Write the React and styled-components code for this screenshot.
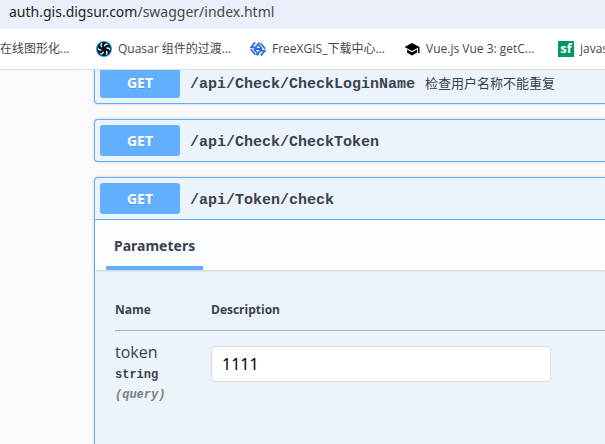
import React from "react";
import styled, { createGlobalStyle } from "styled-components";

const GlobalStyle = createGlobalStyle`
  *, *::before, *::after { box-sizing: border-box; }
  body {
    margin: 0;
    background: #fafafa;
    color: #3b4151;
    font-family: "Open Sans", "Noto Sans CJK SC", sans-serif;
  }
`;

const Page = styled.div`
  display: flex;
  flex-direction: column;
  height: 100vh;
  overflow: hidden;
`;

const AddressBar = styled.div`
  flex: none;
  height: 29px;
  padding: 0 9px;
  background: #ebeff9;
  color: #474747;
  font-family: "Noto Sans", sans-serif;
  font-size: 14px;
  line-height: 24px;
  white-space: nowrap;
`;

const Host = styled.span`
  color: #1f1f1f;
`;

const BookmarkBar = styled.nav`
  flex: none;
  display: flex;
  align-items: center;
  gap: 18px;
  height: 41px;
  background: #fff;
  border-bottom: 1px solid #dedfe0;
  overflow: hidden;
`;

const Bookmark = styled.a`
  flex: none;
  display: flex;
  align-items: center;
  gap: 6px;
  width: ${(p) => (p.$partial ? 78 : 136)}px;
  color: #474747;
  font-size: 12px;
  line-height: 22px;
  text-decoration: none;
  white-space: nowrap;

  svg { flex: none; }
`;

const Viewport = styled.div`
  flex: 1;
  min-height: 0;
  overflow: hidden;
`;

const Operations = styled.main`
  display: flex;
  flex-direction: column;
  gap: 15px;
  margin-top: -9px;
  padding-left: 94px;
`;

const Block = styled.section`
  background: #ebf3fb;
  border: 1px solid #61affe;
  border-right: 0;
  border-radius: 4px 0 0 4px;
  box-shadow: 0 0 3px rgba(0, 0, 0, 0.19);
`;

const Summary = styled.button`
  display: flex;
  align-items: center;
  width: 100%;
  padding: 5px;
  border: 0;
  border-bottom: ${(p) => (p.$open ? "1px solid #61affe" : "0")};
  background: none;
  color: #3b4151;
  font-family: inherit;
  text-align: left;
  white-space: nowrap;
`;

const Method = styled.span`
  width: 80px;
  border-radius: 3px;
  background: #61affe;
  color: #fff;
  font-size: 14px;
  font-weight: 700;
  line-height: 31px;
  text-align: center;
  text-shadow: 0 1px 0 rgba(0, 0, 0, 0.1);
`;

const Path = styled.span`
  padding: 4px 10px 0;
  font-family: "Liberation Mono", monospace;
  font-size: 15px;
  font-weight: 700;
  line-height: 20px;
`;

const Note = styled.span`
  font-size: 13px;
  line-height: 20px;
`;

const SectionHeader = styled.div`
  display: flex;
  height: 50px;
  padding: 0 11px;
  background: rgba(255, 255, 255, 0.8);
  box-shadow: 0 1px 2px rgba(0, 0, 0, 0.15);
`;

const Tab = styled.h4`
  margin: 0;
  padding: 0 8px;
  border-bottom: 4px solid #61affe;
  font-family: "Noto Sans", sans-serif;
  font-size: 14px;
  font-weight: 700;
  line-height: 52px;
`;

const TableWrap = styled.div`
  padding: 20px 0 48px 20px;
`;

const Table = styled.table`
  width: 100%;
  border-collapse: collapse;
`;

const HeadCell = styled.th`
  width: ${(p) => (p.$narrow ? "96px" : "auto")};
  height: 40px;
  padding: 0;
  border-bottom: 1px solid #a8b0bd;
  font-size: 12px;
  font-weight: 700;
  text-align: left;
`;

const Cell = styled.td`
  padding: ${(p) => (p.$field ? 15 : 8)}px 0 0;
  vertical-align: top;
`;

const ParamName = styled.label`
  display: block;
  font-size: 16px;
  line-height: 26px;
`;

const ParamMeta = styled.div`
  color: ${(p) => (p.$muted ? "#808080" : "#3b4151")};
  font-family: "Liberation Mono", monospace;
  font-size: 12px;
  font-style: ${(p) => (p.$muted ? "italic" : "normal")};
  font-weight: 700;
  line-height: 20px;
`;

const Field = styled.input`
  display: block;
  width: 100%;
  max-width: 340px;
  height: 36px;
  padding: 0 10px;
  border: 1px solid #d9d9d9;
  border-radius: 4px;
  background: #fff;
  color: #000;
  font-family: "Noto Sans", sans-serif;
  font-size: 16px;
`;

function QuasarIcon() {
  return (
    <svg width="16" height="16" viewBox="0 0 16 16" aria-hidden="true">
      <circle cx="8" cy="8" r="8" fill="#18a4e0" />
      <circle cx="8" cy="8" r="6.9" fill="#07121b" />
      {[0, 60, 120, 180, 240, 300].map((angle) => (
        <path
          key={angle}
          d="M8 5.2 C8.2 3.3 9.5 2.1 11.5 2.8 C12 3 12.2 3.3 12.3 3.7 C10.8 3.5 9.6 4 9.1 5.5Z"
          fill="#edf8ff"
          transform={`rotate(${angle} 8 8)`}
        />
      ))}
      <circle cx="8" cy="8" r="1.8" fill="#07121b" />
    </svg>
  );
}

function FreeXgisIcon() {
  return (
    <svg width="16" height="16" viewBox="0 0 16 16" fill="none" stroke="#2f70d8" strokeWidth="1.8" aria-hidden="true">
      <path d="M5.2 1.4 1 6.4h5.6" />
      <path d="M9.4 1.6 5.6 6.4" />
      <path d="M.8 8.2 5.4 13.8" />
      <path d="M4 8 8.6 13.8" />
      <path d="M10.8 14.6 15 9.6H9.4" />
      <path d="M6.6 14.4 10.4 9.6" />
      <path d="M15.2 7.8 10.6 2.2" />
      <path d="M12 8 8.4 3.6M4 8h8" />
    </svg>
  );
}

function CapIcon() {
  return (
    <svg width="16" height="16" viewBox="0 0 16 16" fill="#000" aria-hidden="true">
      <path d="M8 2 .5 6 8 10l6-3.2V12h1.5V6z" />
      <path d="M3 8.6v3L8 14.4l5-2.8v-3l-5 2.7z" />
    </svg>
  );
}

const SfBadge = styled.span`
  flex: none;
  width: 16px;
  height: 16px;
  background: #009a61;
  color: #fff;
  font-family: "Open Sans", sans-serif;
  font-size: 13px;
  font-weight: 700;
  line-height: 15px;
  text-align: center;
`;

const operations = [
  { path: "/api/Check/CheckLoginName", note: "检查用户名称不能重复" },
  { path: "/api/Check/CheckToken" },
  { path: "/api/Token/check", open: true },
];

function Parameters() {
  return (
    <>
      <SectionHeader>
        <Tab>Parameters</Tab>
      </SectionHeader>
      <TableWrap>
        <Table>
          <thead>
            <tr>
              <HeadCell $narrow>Name</HeadCell>
              <HeadCell>Description</HeadCell>
            </tr>
          </thead>
          <tbody>
            <tr>
              <Cell>
                <ParamName htmlFor="token">token</ParamName>
                <ParamMeta>string</ParamMeta>
                <ParamMeta $muted>(query)</ParamMeta>
              </Cell>
              <Cell $field>
                <Field id="token" type="text" defaultValue="1111" />
              </Cell>
            </tr>
          </tbody>
        </Table>
      </TableWrap>
    </>
  );
}

export default function App() {
  return (
    <Page>
      <GlobalStyle />
      <AddressBar>
        <Host>auth.gis.digsur.com</Host>/swagger/index.html
      </AddressBar>
      <BookmarkBar>
        <Bookmark href="#" $partial>在线图形化...</Bookmark>
        <Bookmark href="#"><QuasarIcon />Quasar 组件的过渡...</Bookmark>
        <Bookmark href="#"><FreeXgisIcon />FreeXGIS_下载中心...</Bookmark>
        <Bookmark href="#"><CapIcon />Vue.js Vue 3: getC...</Bookmark>
        <Bookmark href="#"><SfBadge>sf</SfBadge>javas</Bookmark>
      </BookmarkBar>
      <Viewport>
        <Operations>
          {operations.map((op) => (
            <Block key={op.path}>
              <Summary type="button" aria-expanded={!!op.open} $open={op.open}>
                <Method>GET</Method>
                <Path>{op.path}</Path>
                {op.note && <Note>{op.note}</Note>}
              </Summary>
              {op.open && <Parameters />}
            </Block>
          ))}
        </Operations>
      </Viewport>
    </Page>
  );
}
